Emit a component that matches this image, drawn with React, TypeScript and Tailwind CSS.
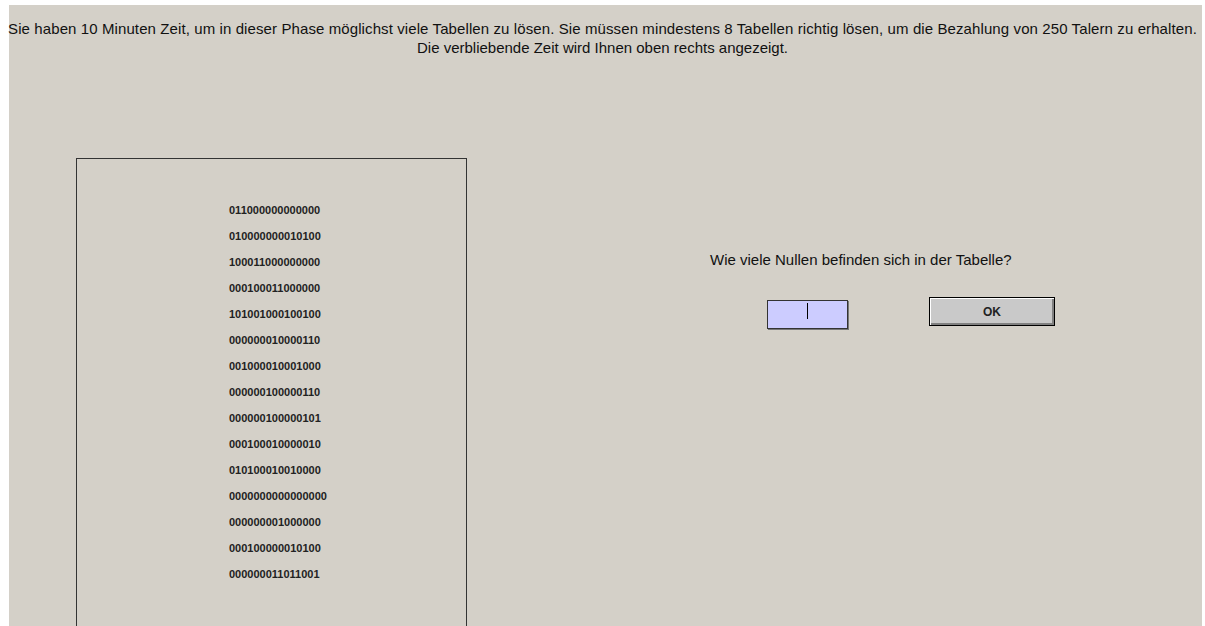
const rows = [
  "011000000000000",
  "010000000010100",
  "100011000000000",
  "000100011000000",
  "101001000100100",
  "000000010000110",
  "001000010001000",
  "000000100000110",
  "000000100000101",
  "000100010000010",
  "010100010010000",
  "0000000000000000",
  "000000001000000",
  "000100000010100",
  "000000011011001",
];

export default function App() {
  return (
    <div
      className="h-[626px] w-[1205px] overflow-hidden bg-white pl-[9px] pr-[3px] pt-[5px] text-[#111]"
      style={{ fontFamily: '"Liberation Sans", Arial, sans-serif' }}
    >
      <div className="h-full bg-[#d4d0c8]">
        {/* Instructions */}
        <div className="-ml-[9px] -mr-[3px] pt-[14px] text-center text-[15px] leading-[19px] whitespace-nowrap">
          <p className="tracking-[0.1px]">
            Sie haben 10 Minuten Zeit, um in dieser Phase möglichst viele Tabellen zu lösen. Sie müssen mindestens 8 Tabellen richtig lösen, um die Bezahlung von 250 Talern zu erhalten.
          </p>
          <p>Die verbliebende Zeit wird Ihnen oben rechts angezeigt.</p>
        </div>

        <div className="mt-[101px] flex items-start">
          {/* Table of digits */}
          <div className="ml-[67px] h-[520px] w-[391px] shrink-0 border border-[#333] pl-[152px] pt-[38px]">
            {rows.map((r, i) => (
              <div key={i} className="h-[26px] text-[11px] font-bold leading-[26px] text-[#222]">
                {r}
              </div>
            ))}
          </div>

          {/* Answer area */}
          <div className="ml-[243px] flex flex-col pt-[92px]">
            <p className="text-[15px] leading-[19px] whitespace-nowrap">
              Wie viele Nullen befinden sich in der Tabelle?
            </p>
            <div className="mt-[28px] flex items-start">
              <div className="ml-[57px] mt-[3px] flex h-[29px] w-[81px] justify-center border border-[#333] bg-[#ccccff] pt-[2px] shadow-[1px_1px_0_#777]">
                <div className="h-[16px] w-[1px] bg-black" />
              </div>
              <button className="ml-[81px] flex h-[29px] w-[126px] items-center justify-center border border-black bg-[#c9c9c9] text-[12px] font-bold text-[#222] shadow-[inset_1px_1px_0_#fff,inset_-2px_-2px_0_#808080]">
                OK
              </button>
            </div>
          </div>
        </div>
      </div>
    </div>
  );
}
